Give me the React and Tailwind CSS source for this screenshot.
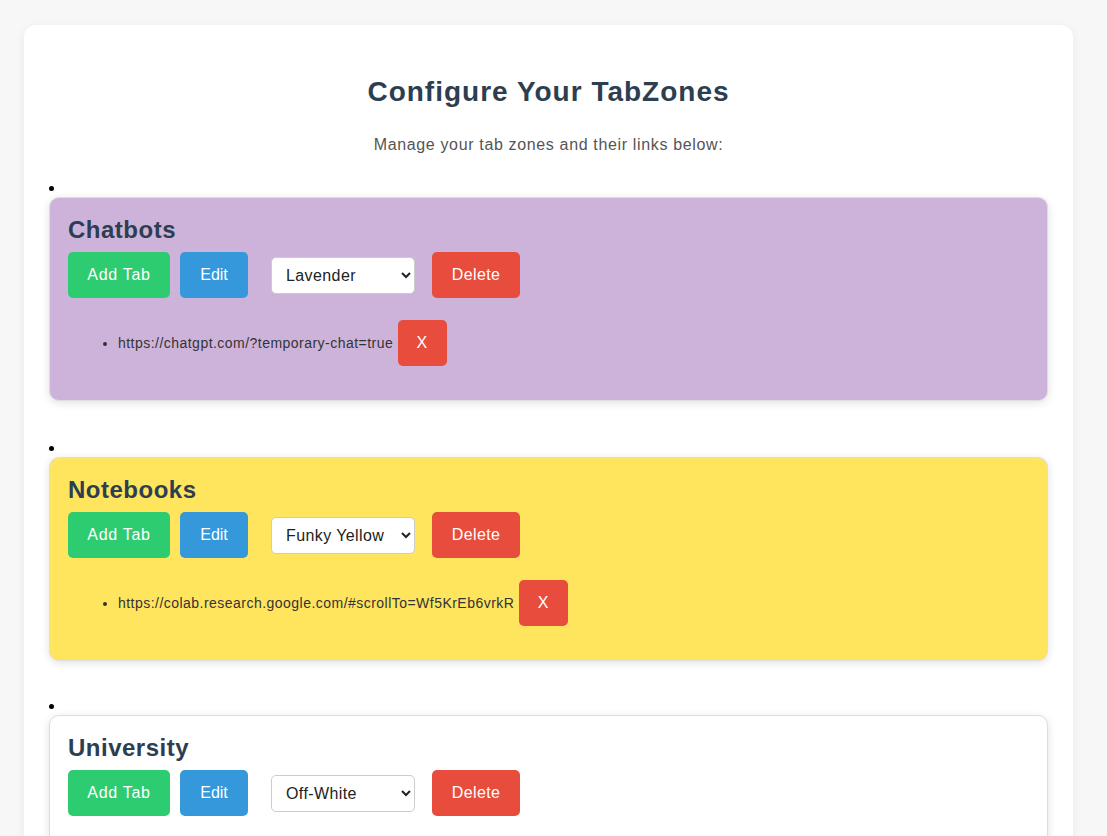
import { useState } from "react";

const zones = [
  { name: "Chatbots", color: "Lavender", bg: "bg-[#cdb3da]", links: ["https://chatgpt.com/?temporary-chat=true"] },
  { name: "Notebooks", color: "Funky Yellow", bg: "bg-[#ffe45e]", links: ["https://colab.research.google.com/#scrollTo=Wf5KrEb6vrkR"] },
  { name: "University", color: "Off-White", bg: "bg-white", links: [] },
];

const colors = ["Lavender", "Funky Yellow", "Off-White", "Mint Green", "Sky Blue"];
const gaps = ["", "mt-[38px]", "mt-[36px]"];

function Zone({ zone, index }) {
  const [color, setColor] = useState(zone.color);
  return (
    <li className={gaps[index]}>
      <div className="h-[18px] flex items-center">
        <span className="block w-[5px] h-[5px] rounded-full bg-black" />
      </div>
      <div className={`${zone.bg} border border-[#dedede] rounded-[10px] shadow-[0_2px_8px_rgba(0,0,0,0.12)] px-[18px] pt-[18px] pb-[19px]`}>
        <h3 className="text-[24px] font-bold text-[#2c3e50] leading-[28px] tracking-[0.5px] mb-2">{zone.name}</h3>
        <div className="flex items-center">
          <button className="bg-[#2ecc71] text-white text-base tracking-[0.7px] rounded-[5px] w-[102px] h-[46px]">Add Tab</button>
          <button className="bg-[#3498db] text-white text-base rounded-[5px] w-[68px] h-[46px] ml-[10px]">Edit</button>
          <select
            value={color}
            onChange={(e) => setColor(e.target.value)}
            className="ml-[23px] w-[144px] h-[37px] pl-[10px] pr-[6px] bg-white border border-[#ccc] rounded-[5px] text-base tracking-[0.4px] text-[#222]"
          >
            {colors.map((c) => (
              <option key={c}>{c}</option>
            ))}
          </select>
          <button className="bg-[#e74c3c] text-white text-base tracking-[0.4px] rounded-[5px] w-[88px] h-[46px] ml-[17px]">Delete</button>
        </div>
        <ul className="list-disc pl-[50px] mt-[22px] mb-[15px] min-h-[46px]">
          {zone.links.map((l) => (
            <li key={l} className="text-[14px] text-[#333] tracking-[0.47px]">
              {l}{" "}
              <button className="bg-[#e74c3c] text-white text-base rounded-[5px] w-[49px] h-[46px] align-baseline">X</button>
            </li>
          ))}
        </ul>
      </div>
    </li>
  );
}

export default function App() {
  return (
    <div className="min-h-screen bg-[#f7f7f7] pt-[25px] pb-10 font-['Liberation_Sans',Arial,sans-serif]">
      <div className="ml-[24px] w-[1049px] bg-white rounded-[12px] shadow-[0_2px_10px_rgba(0,0,0,0.06)] px-[25px] pt-[51px] pb-8">
        <h1 className="text-center text-[28px] font-bold text-[#2c3e50] leading-[32px] tracking-[1px]">Configure Your TabZones</h1>
        <p className="text-center text-base text-[#555] mt-[28px] leading-[18px] tracking-[0.65px]">Manage your tab zones and their links below:</p>
        <ul className="mt-[25px]">
          {zones.map((z, i) => (
            <Zone key={z.name} zone={z} index={i} />
          ))}
        </ul>
      </div>
    </div>
  );
}
